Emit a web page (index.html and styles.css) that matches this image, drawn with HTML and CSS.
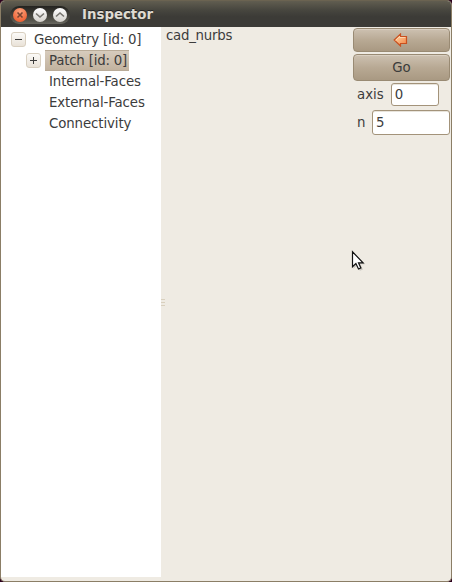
FILE: index.html
```html
<!DOCTYPE html>
<html lang="en">
<head>
<meta charset="utf-8">
<title>Inspector</title>
<link rel="stylesheet" href="styles.css">
</head>
<body>
<div class="window">
  <header class="titlebar">
    <div class="controls">
      <span class="control close"><svg viewBox="0 0 14 14"><path d="M4.5 4.5l5 5M9.5 4.5l-5 5"/></svg></span>
      <span class="control"><svg viewBox="0 0 14 14"><path d="M3 5.5l4 3.5 4-3.5"/></svg></span>
      <span class="control"><svg viewBox="0 0 14 14"><path d="M3 8.5L7 5l4 3.5"/></svg></span>
    </div>
    <h1 class="title">Inspector</h1>
  </header>
  <main class="content">
    <nav class="tree">
      <div class="row root"><span class="toggle minus"></span><span class="label">Geometry [id: 0]</span></div>
      <div class="row child"><span class="toggle plus"></span><span class="label selected">Patch [id: 0]</span></div>
      <div class="row leaf"><span class="label">Internal-Faces</span></div>
      <div class="row leaf"><span class="label">External-Faces</span></div>
      <div class="row leaf"><span class="label">Connectivity</span></div>
    </nav>
    <div class="splitter"><i></i><i></i><i></i></div>
    <section class="detail">
      <div class="name">cad_nurbs</div>
      <div class="form">
        <button class="button back" aria-label="Back"><svg width="16" height="14" viewBox="0 0 16 14"><defs><linearGradient id="arrow" x1="0" y1="0" x2="1" y2="1"><stop offset="0" stop-color="#ffdfb0"/><stop offset="1" stop-color="#f4803f"/></linearGradient></defs><path d="M1.2 7L7.5 1v2.5h6v7h-6V13z" fill="url(#arrow)" stroke="#c9501f" stroke-width="1.2"/><path d="M2.8 7L6.6 3.4v1.1h5.9" fill="none" stroke="#ffe9cd" stroke-opacity=".6"/></svg></button>
        <button class="button">Go</button>
        <div class="field"><label for="axis">axis</label><input id="axis" class="axis" value="0"></div>
        <div class="field last"><label for="n">n</label><input id="n" class="count" value="5"></div>
      </div>
    </section>
  </main>
  <svg class="pointer" width="16" height="24" viewBox="0 0 16 24"><path d="M1.5 1.5v16.2l3.7-3.5 2.7 5.6 3-1.3-2.6-5.2h4.9z" fill="#777" opacity=".3" transform="translate(1 1)"/><path d="M1.5 1.8v15l3.4-3.2 2.6 5.4 2.4-1.1-2.4-5.1h4.6z" fill="#fff" stroke="#111" stroke-width="1.2"/></svg>
</div>
</body>
</html>
```
FILE: styles.css
```css
* { box-sizing: border-box; }
body {
  margin: 0;
  background: #2c001e;
  color: #3c3c3c;
  font: 13.33px/21px "DejaVu Sans", sans-serif;
}
.window {
  position: relative;
  display: flex;
  flex-direction: column;
  width: 452px;
  height: 582px;
  border: 1px solid #8b7e66;
  border-top-color: #6b6351;
  border-radius: 5px;
  background: #efebe3;
  overflow: hidden;
}
.titlebar {
  display: flex;
  align-items: center;
  height: 26px;
  padding: 1px 0 0 9px;
  background: linear-gradient(#615d50, #47463f 35%, #3c3b37 60%);
}
.controls {
  display: flex;
  gap: 6px;
  width: 60px;
  height: 18px;
  padding: 2px 2px 2px 3px;
  border-radius: 9px;
  background: linear-gradient(#24231f, #55544c 80%, #696860);
}
.control {
  width: 14px;
  height: 14px;
  border-radius: 50%;
  background: linear-gradient(#fff, #d4d1cb);
}
.control svg { display: block; fill: none; stroke: #77756f; stroke-width: 1.6; }
.close { background: radial-gradient(circle at 50% 25%, #fba27c, #ef6437 75%); }
.close .x, .close svg { stroke: #7a4430; }
.title {
  margin: 0 0 0 12px;
  color: #dfdbd2;
  font-size: 13.33px;
  line-height: 20px;
  text-shadow: 0 -1px #222;
}
.content { display: flex; height: 550px; }
.tree { width: 160px; padding-top: 2px; background: #fff; }
.row { display: flex; align-items: center; height: 21px; white-space: nowrap; }
.root { padding-left: 10px; letter-spacing: -0.2px; }
.child { padding-left: 25px; letter-spacing: -0.2px; }
.leaf { padding-left: 45px; letter-spacing: -0.1px; }
.toggle {
  width: 15px;
  height: 15px;
  margin-right: 5px;
  border: 1px solid #d8cfc0;
  border-radius: 3px;
  background: linear-gradient(#3c3c3c, #3c3c3c) center / 7px 1px no-repeat, linear-gradient(#fbfaf8, #e9e2d8);
}
.plus {
  margin-right: 4px;
  background: linear-gradient(#3c3c3c, #3c3c3c) center / 7px 1px no-repeat, linear-gradient(#3c3c3c, #3c3c3c) center / 1px 7px no-repeat, linear-gradient(#fbfaf8, #e9e2d8);
}
.label { padding: 0 3px; }
.child .label { width: 84px; height: 21px; padding-left: 4px; line-height: 21px; }
.selected {
  background: linear-gradient(#d8cdbf, #c1b19d);
  box-shadow: inset 0 1px #b9ab98, inset 0 -1px #b9ab98;
}
.splitter {
  display: flex;
  flex-direction: column;
  justify-content: center;
  gap: 2px;
  width: 5px;
}
.splitter i { width: 4px; height: 1px; background: #d9d0be; }
.detail { display: flex; flex: 1; justify-content: space-between; }
.name { line-height: 17px; letter-spacing: -0.25px; }
.form { width: 98px; padding: 1px 1px 0 0; }
.button {
  display: flex;
  align-items: center;
  justify-content: center;
  width: 97px;
  height: 27px;
  margin: 0 0 2px;
  padding: 0;
  border: 1px solid #998a73;
  border-radius: 4px;
  background: linear-gradient(#cdc1b1, #b8a994 50%, #a99982);
  box-shadow: inset 0 1px #d9cfc1;
  color: #3c3c3c;
  font: inherit;
}
.back { height: 24px; }
.back svg { margin-right: 1px; }
.field { display: flex; align-items: center; height: 23px; padding-left: 4px; margin-bottom: 4px; }
.field label { flex: none; }
.last { height: 25px; }
.field input {
  border: 1px solid #a3937a;
  border-radius: 3px;
  padding: 0 3px;
  background: #fff;
  box-shadow: inset 0 1px #e8e4dc;
  color: #3c3c3c;
  font: inherit;
}
.axis { width: 48px; height: 23px; margin-left: 7px; }
.field .count { width: 78px; height: 25px; margin-left: 7px; padding-left: 2.5px; }
.pointer { position: absolute; left: 350px; top: 249px; }
```
